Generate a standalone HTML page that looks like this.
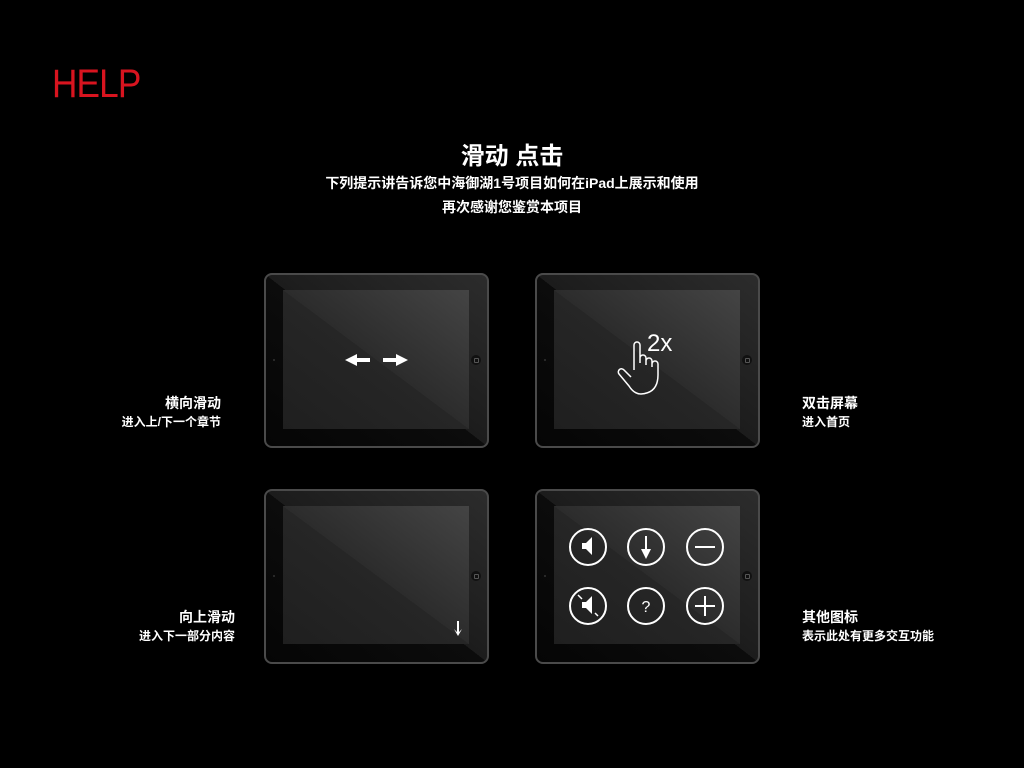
<!DOCTYPE html>
<html><head><meta charset="utf-8"><style>
body{margin:0;width:1024px;height:768px;background:#000;position:relative;overflow:hidden;font-family:"Liberation Sans","Noto Sans CJK SC",sans-serif;color:#fff}
.a{position:absolute}
.pad{position:absolute;width:225px;height:175px;border:2px solid #4a4a4a;border-radius:8px;background:linear-gradient(to bottom left,#2c2c2c,#1c1c1c 50%,#0c0c0c 50%,#050505);box-sizing:border-box}
.scr{position:absolute;left:17px;top:15px;width:186px;height:139px;background:linear-gradient(to bottom left,#444,#2c2c2c 50%,#262626 50%,#1f1f1f)}
.home{position:absolute;right:6px;top:80px;width:10px;height:10px;border-radius:50%;background:#111}
.home:after{content:"";position:absolute;left:3px;top:3px;width:3px;height:3px;border:1px solid #555;border-radius:1px}
.cam{position:absolute;left:7px;top:84px;width:2px;height:2px;background:#333;border-radius:50%}
.t{font-weight:bold;font-size:14px}
.s{font-weight:bold;font-size:12px}
</style></head><body>
<div class="a" style="left:52px;top:62px;font-size:40px;color:#d8141f;letter-spacing:-1px;transform:scaleX(0.88);transform-origin:left top">HELP</div>
<div class="a" style="left:0;width:1024px;top:136px;text-align:center;font-size:24px;font-weight:bold">滑动 点击</div>
<div class="a t" style="left:0;width:1024px;top:173px;text-align:center">下列提示讲告诉您中海御湖1号项目如何在iPad上展示和使用</div>
<div class="a t" style="left:0;width:1024px;top:197px;text-align:center">再次感谢您鉴赏本项目</div>

<div class="pad" style="left:264px;top:273px"><div class="scr"></div><div class="cam"></div><div class="home"></div>
<svg class="a" style="left:0;top:0" width="222" height="172"><g fill="#fff"><polygon points="79,85 91,79 91,83 104,83 104,87 91,87 91,91"/><polygon points="142,85 130,79 130,83 117,83 117,87 130,87 130,91"/></g></svg></div>

<div class="pad" style="left:535px;top:273px"><div class="scr"></div><div class="cam"></div><div class="home"></div>
<svg class="a" style="left:0;top:0" width="222" height="172" fill="none" stroke="#fff" stroke-width="1.5"><path d="M97 95 V70 a3 3 0 0 1 6 0 V88 M103 83 a3 3 0 0 1 6 0 V90 M109 86 a3 3 0 0 1 6 0 V92 M115 89 a3 3 0 0 1 6 0 V100 q0 18 -17 19 q-7 0 -12 -8 l-10 -12 a3 3 0 0 1 5 -4 l7 7"/><text x="110" y="76" fill="#fff" stroke="none" font-size="24" font-family="Liberation Sans" font-weight="normal">2x</text></svg></div>

<div class="pad" style="left:264px;top:489px"><div class="scr" style="height:138px"></div><div class="cam"></div><div class="home"></div>
<svg class="a" style="left:0;top:0" width="222" height="172"><polygon fill="#fff" points="191,130 191,141 188,138 192,145 196,138 193,141 193,130"/></svg></div>

<div class="pad" style="left:535px;top:489px"><div class="scr" style="height:138px"></div><div class="cam"></div><div class="home"></div>
<svg class="a" style="left:0;top:0" width="222" height="172" fill="none" stroke="#fff" stroke-width="2"><circle cx="51" cy="56" r="18"/><circle cx="109" cy="56" r="18"/><circle cx="168" cy="56" r="18"/><circle cx="51" cy="115" r="18"/><circle cx="109" cy="115" r="18"/><circle cx="168" cy="115" r="18"/>
<polygon fill="#fff" stroke="none" points="45,52 49,52 55,46 55,64 49,58 45,58"/>
<polygon fill="#fff" stroke="none" points="45,111 49,111 55,105 55,123 49,117 45,117"/>
<path d="M41 104 l4 4 M58 122 l3 3" stroke-width="1.5"/>
<path d="M109 45 V61"/><polygon fill="#fff" stroke="none" points="104,58 114,58 109,68"/>
<path d="M158 56 H178 M158 115 H178 M168 105 V125"/>
<text x="109" y="121" fill="#fff" stroke="none" text-anchor="middle" font-size="16" font-family="Liberation Sans">?</text></svg></div>

<div class="a t" style="right:803px;top:393px;text-align:right">横向滑动</div>
<div class="a s" style="right:803px;top:413px;text-align:right">进入上/下一个章节</div>
<div class="a t" style="left:802px;top:393px">双击屏幕</div>
<div class="a s" style="left:802px;top:413px">进入首页</div>
<div class="a t" style="right:789px;top:607px;text-align:right">向上滑动</div>
<div class="a s" style="right:789px;top:627px;text-align:right">进入下一部分内容</div>
<div class="a t" style="left:802px;top:607px">其他图标</div>
<div class="a s" style="left:802px;top:627px">表示此处有更多交互功能</div>
</body></html>
